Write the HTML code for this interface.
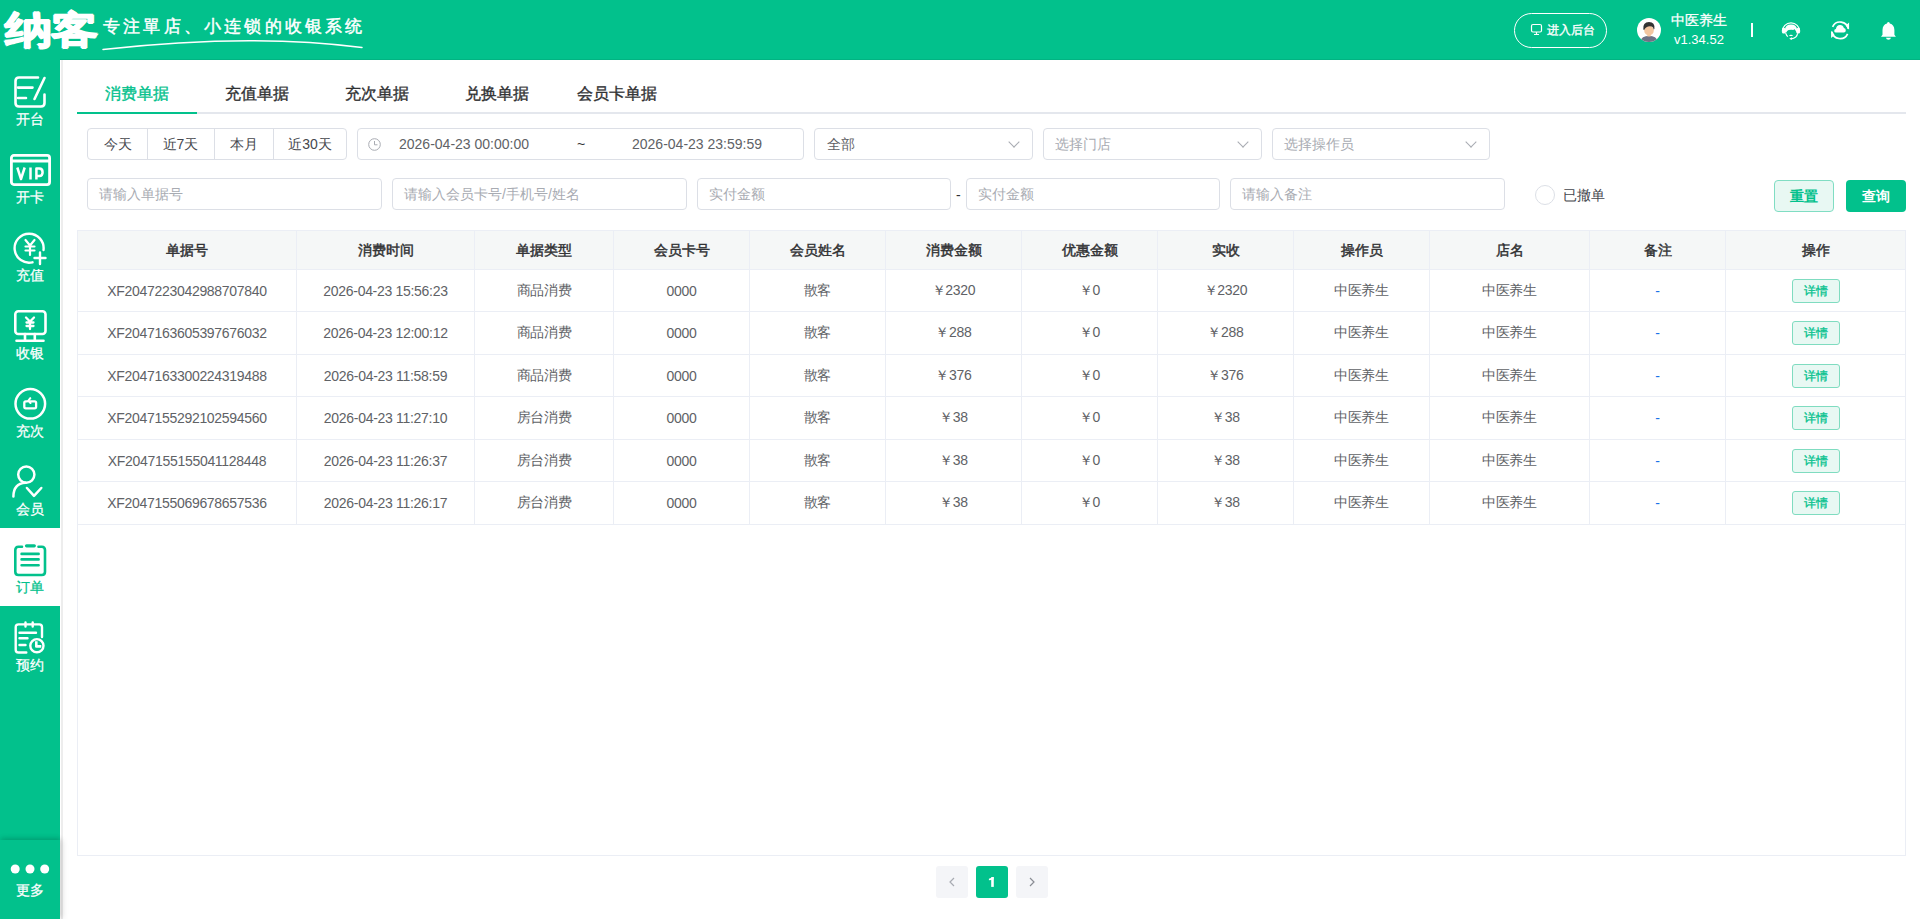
<!DOCTYPE html>
<html><head><meta charset="utf-8">
<style>
*{box-sizing:border-box;margin:0;padding:0}
html,body{width:1920px;height:919px;overflow:hidden;background:#fff;font-family:"Liberation Sans",sans-serif;}
.abs{position:absolute}
#hdr{position:absolute;left:0;top:0;width:1920px;height:60px;background:#02C18C;color:#fff}
#hline{position:absolute;left:60px;top:59px;width:1860px;height:1px;background:rgba(0,0,0,.07)}
#side{position:absolute;left:0;top:60px;width:60px;height:859px;background:#02C18C}
#sline{position:absolute;left:61px;top:60px;width:2px;height:859px;background:#EDEDED}
.item{position:absolute;left:0;width:60px;height:78px;color:#fff}
.item svg{overflow:visible;position:absolute;left:14px;top:16px;width:32px;height:32px}
.item .lb{position:absolute;left:0;width:60px;top:51px;text-align:center;font-size:14px;line-height:16px;-webkit-text-stroke:0.25px currentColor}
.item.act{background:#fff;color:#02C18C}
#more{position:absolute;left:0;top:840px;width:60px;height:79px;background:#02C18C;box-shadow:0 -2px 5px rgba(0,0,0,.12), 3px 0 6px rgba(0,0,0,.1)}
#main{position:absolute;left:62px;top:60px;width:1858px;height:859px;background:#fff}
.tabs{position:absolute;left:77px;top:60px;width:1829px;height:54px;border-bottom:2px solid #E4E7ED}
.tab{position:absolute;top:0;width:120px;height:52px;line-height:67px;text-align:center;font-size:16px;color:#303133;-webkit-text-stroke:0.35px currentColor}
.tab.act{color:#02C18C;border-bottom:2px solid #02C18C;height:54px}
.box{position:absolute;height:32px;border:1px solid #DCDFE6;border-radius:4px;background:#fff;font-size:14px;line-height:30px;color:#606266}
.ph{color:#A8ABB2;padding-left:11px}
.arrow{position:absolute;right:14px;top:9px;width:8px;height:8px;border-right:1px solid #A8ABB2;border-bottom:1px solid #A8ABB2;transform:rotate(45deg)}
table{border-collapse:collapse;table-layout:fixed}
#tbl{position:absolute;left:77px;top:230px;width:1829px;height:626px;border:1px solid #EBEEF5}
#tbl table{position:absolute;left:-1px;top:-1px;width:1829px}
#tbl th{height:39px;background:#F5F7F7;font-size:14px;color:#303133;font-weight:normal;-webkit-text-stroke:0.45px #303133;border:1px solid #EBEEF5;padding-top:1px}
#tbl td{height:42.47px;font-size:14px;color:#606266;text-align:center;border:1px solid #EBEEF5;letter-spacing:-0.3px;padding:0}
.det{display:inline-block;width:48px;height:24px;line-height:22px;border:1px solid #7FDCC0;background:#E8F8F3;color:#02C18C;font-size:12px;-webkit-text-stroke:0.3px #02C18C;border-radius:3px;letter-spacing:0}
.dash{color:#1A73E8;letter-spacing:0}
.pg{position:absolute;top:866px;width:32px;height:32px;border-radius:3px;background:#F4F5F8;color:#A8ABB2;text-align:center;line-height:32px;font-size:13px}
</style></head><body>
<div id="main"></div>
<div class="tabs">
<div class="tab act" style="left:0">消费单据</div>
<div class="tab" style="left:120px">充值单据</div>
<div class="tab" style="left:240px">充次单据</div>
<div class="tab" style="left:360px">兑换单据</div>
<div class="tab" style="left:480px">会员卡单据</div>
</div>
<div class="box" style="left:87px;top:128px;width:260px;color:#45474d">
<div class="abs" style="left:0;top:0;width:59px;text-align:center">今天</div>
<div class="abs" style="left:59px;top:-1px;width:1px;height:32px;background:#DCDFE6"></div>
<div class="abs" style="left:59px;top:0;width:67px;text-align:center">近7天</div>
<div class="abs" style="left:126px;top:-1px;width:1px;height:32px;background:#DCDFE6"></div>
<div class="abs" style="left:126px;top:0;width:59px;text-align:center">本月</div>
<div class="abs" style="left:185px;top:-1px;width:1px;height:32px;background:#DCDFE6"></div>
<div class="abs" style="left:185px;top:0;width:74px;text-align:center">近30天</div>
</div>
<div class="box" style="left:357px;top:128px;width:447px">
<svg class="abs" style="left:10px;top:9px" width="13" height="13" viewBox="0 0 13 13" fill="none" stroke="#A8ABB2" stroke-width="1"><circle cx="6.5" cy="6.5" r="5.8"/><path d="M6.5 3 V6.8 H9.5"/></svg>
<div class="abs" style="left:41px;top:0">2026-04-23 00:00:00</div>
<div class="abs" style="left:219px;top:0;color:#303133">~</div>
<div class="abs" style="left:274px;top:0">2026-04-23 23:59:59</div>
</div>
<div class="box" style="left:814px;top:128px;width:219px"><span style="padding-left:12px;color:#606266">全部</span><div class="arrow"></div></div>
<div class="box" style="left:1043px;top:128px;width:219px"><span class="ph">选择门店</span><div class="arrow"></div></div>
<div class="box" style="left:1272px;top:128px;width:218px"><span class="ph">选择操作员</span><div class="arrow"></div></div>
<div class="box" style="left:87px;top:178px;width:295px"><span class="ph">请输入单据号</span></div>
<div class="box" style="left:392px;top:178px;width:295px"><span class="ph">请输入会员卡号/手机号/姓名</span></div>
<div class="box" style="left:697px;top:178px;width:254px"><span class="ph">实付金额</span></div>
<div class="abs" style="left:956px;top:187px;font-size:14px;line-height:16px;color:#303133">-</div>
<div class="box" style="left:966px;top:178px;width:254px"><span class="ph">实付金额</span></div>
<div class="box" style="left:1230px;top:178px;width:275px"><span class="ph">请输入备注</span></div>
<div class="abs" style="left:1535px;top:185px;width:20px;height:20px;border:1px solid #DCDFE6;border-radius:50%"></div>
<div class="abs" style="left:1563px;top:186px;font-size:14px;line-height:18px;color:#45474d">已撤单</div>
<div class="abs" style="left:1774px;top:180px;width:60px;height:32px;border:1px solid #80DDC3;background:#E8F8F3;border-radius:4px;color:#02C18C;font-size:14px;font-weight:bold;text-align:center;line-height:30px">重置</div>
<div class="abs" style="left:1846px;top:180px;width:60px;height:32px;background:#02C18C;border-radius:4px;color:#fff;font-size:14px;font-weight:bold;text-align:center;line-height:32px">查询</div>
<div id="tbl"><table><colgroup><col style="width:219px"><col style="width:178px"><col style="width:139px"><col style="width:136px"><col style="width:136px"><col style="width:136px"><col style="width:136px"><col style="width:136px"><col style="width:136px"><col style="width:160px"><col style="width:136px"><col style="width:180px"></colgroup><tr><th>单据号</th><th>消费时间</th><th>单据类型</th><th>会员卡号</th><th>会员姓名</th><th>消费金额</th><th>优惠金额</th><th>实收</th><th>操作员</th><th>店名</th><th>备注</th><th>操作</th></tr><tr><td>XF2047223042988707840</td><td>2026-04-23 15:56:23</td><td>商品消费</td><td>0000</td><td>散客</td><td>￥2320</td><td>￥0</td><td>￥2320</td><td>中医养生</td><td>中医养生</td><td><span class="dash">-</span></td><td><span class="det">详情</span></td></tr><tr><td>XF2047163605397676032</td><td>2026-04-23 12:00:12</td><td>商品消费</td><td>0000</td><td>散客</td><td>￥288</td><td>￥0</td><td>￥288</td><td>中医养生</td><td>中医养生</td><td><span class="dash">-</span></td><td><span class="det">详情</span></td></tr><tr><td>XF2047163300224319488</td><td>2026-04-23 11:58:59</td><td>商品消费</td><td>0000</td><td>散客</td><td>￥376</td><td>￥0</td><td>￥376</td><td>中医养生</td><td>中医养生</td><td><span class="dash">-</span></td><td><span class="det">详情</span></td></tr><tr><td>XF2047155292102594560</td><td>2026-04-23 11:27:10</td><td>房台消费</td><td>0000</td><td>散客</td><td>￥38</td><td>￥0</td><td>￥38</td><td>中医养生</td><td>中医养生</td><td><span class="dash">-</span></td><td><span class="det">详情</span></td></tr><tr><td>XF2047155155041128448</td><td>2026-04-23 11:26:37</td><td>房台消费</td><td>0000</td><td>散客</td><td>￥38</td><td>￥0</td><td>￥38</td><td>中医养生</td><td>中医养生</td><td><span class="dash">-</span></td><td><span class="det">详情</span></td></tr><tr><td>XF2047155069678657536</td><td>2026-04-23 11:26:17</td><td>房台消费</td><td>0000</td><td>散客</td><td>￥38</td><td>￥0</td><td>￥38</td><td>中医养生</td><td>中医养生</td><td><span class="dash">-</span></td><td><span class="det">详情</span></td></tr></table></div>
<div class="pg" style="left:936px"><svg width="32" height="32" viewBox="0 0 32 32"><path d="M18 12 L14 16 L18 20" stroke="#A8ABB2" stroke-width="1.2" fill="none"/></svg></div>
<div class="pg" style="left:976px;background:#02C18C"><svg width="32" height="32" viewBox="0 0 32 32"><path d="M16.5 11.1 V20.9" stroke="#fff" stroke-width="2.6"/><path d="M12.9 12.7 Q15 12.2 16.5 11.1 L17.6 11.1 V13.2 Q15.5 14 12.9 14.2Z" fill="#fff"/></svg></div>
<div class="pg" style="left:1016px"><svg width="32" height="32" viewBox="0 0 32 32"><path d="M14 12 L18 16 L14 20" stroke="#8a8d94" stroke-width="1.2" fill="none"/></svg></div>

<div id="hdr">
<div class="abs" style="left:5px;top:8px;font-size:38px;line-height:44px;font-weight:bold;letter-spacing:-1px;text-shadow:0.7px 0 #fff,-0.7px 0 #fff,0 0.7px #fff,0 -0.7px #fff;transform:scaleX(1.25);transform-origin:0 0">纳客</div>
<div class="abs" style="left:103px;top:16px;font-size:17px;line-height:22px;letter-spacing:3.2px;-webkit-text-stroke:0.45px #fff">专注單店、小连锁的收银系统</div>
<svg class="abs" style="left:100px;top:30px" width="266" height="24" viewBox="0 0 266 24"><path d="M3 19.5 Q150 3 262 17.5" stroke="#fff" stroke-width="1.5" fill="none" stroke-linecap="round"/></svg>
<div class="abs" style="left:1514px;top:13px;width:93px;height:35px;border:1px solid #fff;border-radius:18px"></div>
<svg class="abs" style="left:1530px;top:23px" width="13" height="13" viewBox="0 0 13 13"><rect x="1.5" y="1.5" width="10" height="7.5" rx="1.5" stroke="#fff" stroke-width="1.2" fill="none"/><path d="M4 11.5 H9 M6.5 9 V11.5" stroke="#fff" stroke-width="1.2"/></svg>
<div class="abs" style="left:1547px;top:21.5px;font-size:12px;line-height:16px;-webkit-text-stroke:0.35px #fff">进入后台</div>
<svg class="abs" style="left:1637px;top:18px" width="24" height="24" viewBox="0 0 24 24"><circle cx="12" cy="12" r="12" fill="#fff"/><clipPath id="cc"><circle cx="12" cy="12" r="12"/></clipPath><g clip-path="url(#cc)"><path d="M2.5 26 Q3.5 17.8 12 17.8 Q20.5 17.8 21.5 26 Z" fill="#6E7285"/><rect x="10.3" y="15" width="3.4" height="3.5" fill="#F3C6A0"/><ellipse cx="12" cy="12.6" rx="4.8" ry="4.9" fill="#F3C6A0"/><path d="M6.3 11.5 Q5.6 4 12 4 Q18.2 4 17.4 11 L16.6 11.6 Q16.4 8.2 12.8 8.3 Q9 8.4 7.2 12 Z" fill="#333"/></g></svg>
<div class="abs" style="left:1671px;top:11px;font-size:14px;line-height:18px;-webkit-text-stroke:0.3px #fff">中医养生</div>
<div class="abs" style="left:1674px;top:31px;font-size:13px;line-height:17px">v1.34.52</div>
<div class="abs" style="left:1751px;top:23px;width:2px;height:14px;background:#fff"></div>
<svg class="abs" style="left:1781px;top:21px" width="20" height="20" viewBox="0 0 20 20"><path d="M1.3 10.5 A8.7 8.7 0 0 1 18.7 10.5" stroke="#fff" stroke-width="1.3" fill="none"/><path d="M3.9 9.2 Q4 3.4 10 3.4 Q16 3.4 16.1 9.2 L16.3 12.5 Q15.1 9.6 13.2 7.9 L12.5 9 Q10 8.4 7.6 9.1 Q5.9 9.6 5.3 11.6 L3.7 11.6 Z" fill="#fff"/><rect x="1.1" y="6.9" width="3.4" height="5.5" rx="1.2" fill="#fff"/><rect x="15.5" y="6.9" width="3.4" height="5.5" rx="1.2" fill="#fff"/><path d="M4.6 12 Q5.4 14.5 6.9 15.6" stroke="#fff" stroke-width="1.1" fill="none"/><ellipse cx="10" cy="14.4" rx="1.8" ry="0.65" fill="#fff"/><path d="M16.6 12.2 Q16 17.2 10 17.8" stroke="#fff" stroke-width="1.2" fill="none"/><path d="M8.2 17.7 L10.9 16.3 L10.7 19 Z" fill="#fff"/></svg>
<svg class="abs" style="left:1830px;top:20.3px" width="20" height="20" viewBox="0 0 20 20"><path d="M2.58 6.79 A8.3 8.3 0 0 1 18.27 8.86 M17.62 13.81 A8.3 8.3 0 0 1 1.93 11.74" stroke="#fff" stroke-width="1.7" fill="none"/><path d="M19.1 2.6 V9.8 L15.6 5.6Z M1.1 18 V10.8 L4.6 15Z" fill="#fff"/><path d="M6 12.6 Q4.2 12.6 4.2 10.9 Q4.2 9.3 5.9 9.1 Q6.6 4.9 10 4.9 Q13.1 4.9 13.9 8 Q15.8 8.2 15.8 10.3 Q15.8 12.6 13.8 12.6 Z" fill="#fff"/></svg>
<svg class="abs" style="left:1879px;top:21px" width="18" height="20" viewBox="0 0 18 20"><path d="M9.4 1 Q10.8 1 10.8 2.6 Q15.2 3.8 15.4 9 V13.8 L16.9 15.7 H2 L3.5 13.8 V9 Q3.7 3.8 8 2.6 Q8 1 9.4 1 Z" fill="#fff"/><path d="M6.9 16.7 H12 Q11.5 18.8 9.45 18.8 Q7.4 18.8 6.9 16.7 Z" fill="#fff"/></svg>
</div>
<div id="sline"></div>
<div id="hline"></div>
<div id="side">
<div class="item" style="top:0"><svg viewBox="0 0 32 32" fill="none" stroke="currentColor" stroke-width="2.6" stroke-linecap="round"><path d="M24 1.5 H5 Q1.5 1.5 1.5 5 V27 Q1.5 30.5 5 30.5 H27 Q30.5 30.5 30.5 27 V18.5"/><path d="M4 11.6 H18.5 M4 22 H12 M30.5 2 L20.5 23"/></svg><div class="lb">开台</div></div>
<div class="item" style="top:78px"><svg style="left:10px;width:41px" viewBox="0 0 41 32" fill="none" stroke="currentColor" stroke-width="2.8"><rect x="1.4" y="1.4" width="38.2" height="29.2" rx="2.5"/><path d="M1.4 7 H39.6"/><path d="M7.3 13.5 L11 25 L14.7 13.5 M20.5 13.5 V25.5 M26.4 25.5 V14.4 H29.3 Q32.6 14.4 32.6 18.2 Q32.6 22 29.3 22 H26.4" stroke-width="2.5" stroke-linejoin="round"/></svg><div class="lb">开卡</div></div>
<div class="item" style="top:156px"><svg viewBox="0 0 32 32" fill="none" stroke="currentColor" stroke-width="2.4" stroke-linecap="round"><path d="M29.5 18 A14.5 14.5 0 1 0 18.5 30.3"/><path d="M26 20.5 V32 M20.5 26 H31.5"/><path d="M11.5 8 L16 13.5 L20.5 8 M16 13.5 V23 M11.5 14.5 H20.5 M11.5 18.5 H20.5" stroke-width="2.2"/></svg><div class="lb">充值</div></div>
<div class="item" style="top:234px"><svg viewBox="0 0 32 32" fill="none" stroke="currentColor" stroke-width="2.6" stroke-linecap="round"><rect x="1.3" y="1.3" width="30.2" height="22.7" rx="3"/><path d="M11 24 V30.7 M20.8 24 V30.7 M2.5 30.7 H29.5"/><path d="M12 7.5 L16 11.5 L20 7.5 M16 11.5 V19 M12.5 12.5 H19.5 M12.5 16 H19.5" stroke-width="2.3"/></svg><div class="lb">收银</div></div>
<div class="item" style="top:312px"><svg viewBox="0 0 32 32" fill="none" stroke="currentColor" stroke-width="2.5" stroke-linecap="round" stroke-linejoin="round"><circle cx="16.3" cy="15.8" r="14.8"/><path d="M13.3 13.3 H11.8 Q10.3 13.3 10.3 14.8 V18.8 Q10.3 20.3 11.8 20.3 H20.6 Q22.1 20.3 22.1 18.8 V14.8 Q22.1 13.3 20.6 13.3 H16" stroke-width="2.3"/><path d="M16.3 10.2 L14.2 12.8 L16.5 15" stroke-width="2.1"/></svg><div class="lb">充次</div></div>
<div class="item" style="top:390px"><svg viewBox="0 0 32 32" fill="none" stroke="currentColor" stroke-width="2.5" stroke-linecap="round" stroke-linejoin="round"><circle cx="12.3" cy="8.6" r="8.1"/><path d="M-0.6 30.5 Q-0.6 17.5 11.5 16.7"/><path d="M12.9 22 L20 29.8 L27.3 22"/></svg><div class="lb">会员</div></div>
<div class="item act" style="top:468px"><svg viewBox="0 0 32 32" fill="none" stroke="currentColor" stroke-width="2.6" stroke-linecap="round" stroke-linejoin="round"><path d="M8 2.8 H4.5 Q1.3 2.8 1.3 6 V27.8 Q1.3 31 4.5 31 H27.8 Q31 31 31 27.8 V6 Q31 2.8 27.8 2.8 H24.5"/><path d="M12.5 1.8 H20.3" stroke-width="3.2"/><path d="M7.6 9.9 H24.6 M7.6 15.4 H24.6 M7.6 21.2 H24.6"/></svg><div class="lb">订单</div></div>
<div class="item" style="top:546px"><svg viewBox="0 0 32 32" fill="none" stroke="currentColor" stroke-width="2.4" stroke-linecap="round" stroke-linejoin="round"><path d="M12.3 30.5 H4.5 Q1.7 30.5 1.7 27.7 V5.2 Q1.7 2.4 4.5 2.4 H25.3 Q28 2.4 28 5.2 V15"/><path d="M11.5 0.5 V4.5 M18.7 0.5 V4.5"/><path d="M5.5 10.7 H22 M5.5 16.3 H13.5 M5.5 23 H11.5"/><circle cx="22.9" cy="23.7" r="6.6"/><path d="M22.3 20.6 V24.4 H26" stroke-width="2.6" stroke-linecap="square"/></svg><div class="lb">预约</div></div>
</div>
<div id="more"><svg class="abs" style="left:9px;top:24px" width="42" height="10" viewBox="0 0 42 10"><circle cx="6.2" cy="5" r="4.5" fill="#fff"/><circle cx="21" cy="5" r="4.5" fill="#fff"/><circle cx="35.7" cy="5" r="4.5" fill="#fff"/></svg><div class="abs" style="left:0;top:42px;width:60px;text-align:center;color:#fff;font-size:14px;line-height:16px;-webkit-text-stroke:0.25px #fff">更多</div></div>
</body></html>
